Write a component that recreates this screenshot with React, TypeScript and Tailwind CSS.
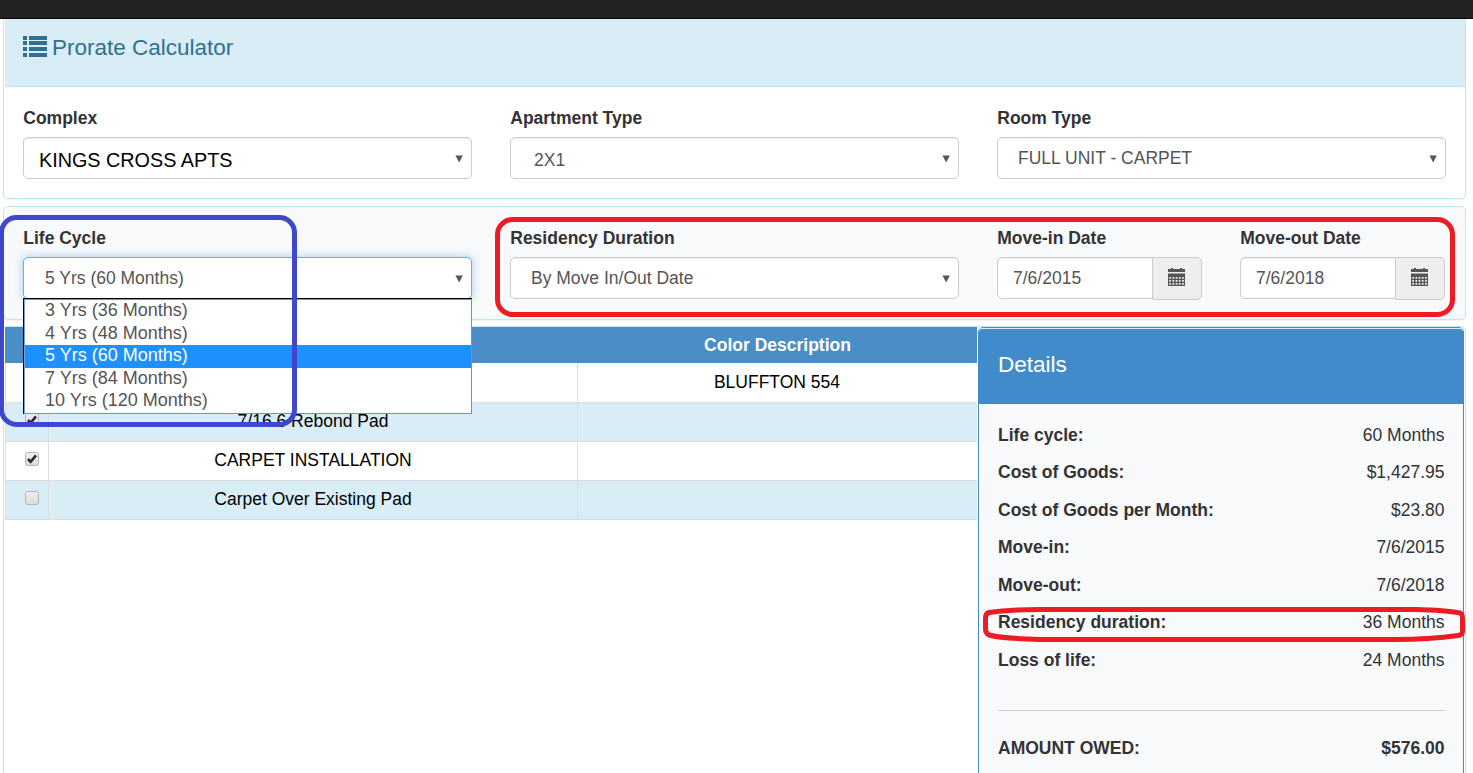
import React from "react";

const rows = [
  { checked: true, name: "CARPET", color: "BLUFFTON 554", height: "h-[40px]", bg: "bg-white" },
  { checked: true, name: "7/16 6 Rebond Pad", color: "", height: "h-[39px]", bg: "bg-[#d9edf7]" },
  { checked: true, name: "CARPET INSTALLATION", color: "", height: "h-[39px]", bg: "bg-white" },
  { checked: false, name: "Carpet Over Existing Pad", color: "", height: "h-[39px]", bg: "bg-[#d9edf7]" },
];

const details = [
  ["Life cycle:", "60 Months"],
  ["Cost of Goods:", "$1,427.95"],
  ["Cost of Goods per Month:", "$23.80"],
  ["Move-in:", "7/6/2015"],
  ["Move-out:", "7/6/2018"],
  ["Residency duration:", "36 Months"],
  ["Loss of life:", "24 Months"],
];

const options = ["3 Yrs (36 Months)", "4 Yrs (48 Months)", "5 Yrs (60 Months)", "7 Yrs (84 Months)", "10 Yrs (120 Months)"];

function ListIcon() {
  return (
    <svg width="24" height="21" viewBox="0 0 24 21" fill="#31708f" shapeRendering="crispEdges">
      {[0, 5, 11, 17].map((y) => (
        <g key={y}>
          <rect x="0" y={y} width="4" height="4" />
          <rect x="6" y={y} width="18" height="4" />
        </g>
      ))}
    </svg>
  );
}

function CalendarIcon() {
  return (
    <svg width="17" height="18" viewBox="0 0 17 18" fill="#555">
      <path d="M3 0h2v1h7V0h2v1h3v3H0V1h3z" />
      <path fillRule="evenodd" d="M0 5.500h17V18H0zM1.200 9v1.800h1.800V9zM4.400 9v1.800h1.800V9zM7.600 9v1.800h1.800V9zM10.800 9v1.800h1.800V9zM14 9v1.800h1.800V9zM1.200 12v1.800h1.800V12zM4.400 12v1.800h1.800V12zM7.600 12v1.800h1.800V12zM10.800 12v1.800h1.800V12zM14 12v1.800h1.800V12zM1.200 15v1.800h1.800V15zM4.400 15v1.800h1.800V15zM7.600 15v1.800h1.800V15zM10.800 15v1.800h1.800V15zM14 15v1.800h1.800V15z" />
    </svg>
  );
}

function Arrow() {
  return (
    <svg className="mt-[2px] mr-[8px] ml-auto" width="8" height="8" viewBox="0 0 8 8" fill="#555">
      <path d="M0.5 0.5h7.3L4.150 7.600z" />
    </svg>
  );
}

function Label({ children }: { children: React.ReactNode }) {
  return <div className="h-[25px] pl-[0.25px] text-[17.5px] leading-[25px] font-bold whitespace-nowrap text-[#333]">{children}</div>;
}

function Select({ children, className, border }: { children: React.ReactNode; className: string; border?: string }) {
  return (
    <div className={`mt-[6px] flex h-[42px] items-center rounded-[5px] border bg-white ${border ?? "border-[#ccc] shadow-[inset_0_1px_1px_rgba(0,0,0,0.075)]"}`}>
      <span className={`whitespace-nowrap ${className}`}>{children}</span>
      <Arrow />
    </div>
  );
}

function DateField({ label, value }: { label: string; value: string }) {
  return (
    <div className="w-[205px]">
      <Label>{label}</Label>
      <div className="mt-[6px] flex items-start">
        <div className="flex h-[42px] w-[156px] items-center rounded-l-[5px] border border-[#ccc] bg-white pl-[15px] text-[17.5px] text-[#555] shadow-[inset_0_1px_1px_rgba(0,0,0,0.075)]">
          {value}
        </div>
        <div className="-ml-px flex h-[43px] w-[50px] items-start justify-start rounded-r-[5px] border border-[#ccc] bg-[#eee] pt-[10px] pl-[15px]">
          <CalendarIcon />
        </div>
      </div>
    </div>
  );
}

function CheckBox({ checked }: { checked: boolean }) {
  return (
    <svg width="14" height="14" viewBox="0 0 14 14">
      <defs>
        <linearGradient id="boxFill" x1="0" y1="0" x2="0" y2="1">
          <stop offset="0" stopColor="#eee" />
          <stop offset="1" stopColor="#dcdcdc" />
        </linearGradient>
      </defs>
      <rect x="0.5" y="0.5" width="13" height="13" rx="2" fill="url(#boxFill)" stroke="#b4b4b4" />
      {checked && <path d="M3 7l2.600 2.800L11 3.300" fill="none" stroke="#2b2b2b" strokeWidth="2.600" />}
    </svg>
  );
}

export default function App() {
  return (
    <div className="relative h-[773px] w-[1473px] overflow-hidden bg-white font-['Liberation_Sans',Arial,sans-serif] text-[17.5px] text-[#333]">
      <div className="h-[19px] border-b border-[#080808] bg-[#222]" />

      <section className="ml-[3px] h-[180px] w-[1463px] rounded-b-[5px] border border-t-0 border-[#bce8f1] pl-px shadow-[0_1px_1px_rgba(0,0,0,0.05)]">
        <header className="flex h-[68px] items-start border-b border-[#bce8f1] bg-[#d9edf7] pt-[17px] pl-[18px]">
          <ListIcon />
          <h1 className="-mt-[1px] ml-[5px] text-[22.5px] leading-[25px] whitespace-nowrap text-[#31708f]">Prorate Calculator</h1>
        </header>
        <div className="grid grid-cols-[449px_449px_449px] gap-x-[38px] pt-[19px] pl-[18px]">
          <div>
            <Label>Complex</Label>
            <Select className="pt-[5px] pl-[15px] text-[19.8px] text-black">KINGS CROSS APTS</Select>
          </div>
          <div>
            <Label>Apartment Type</Label>
            <Select className="pt-[4px] pl-[23px] text-[17.5px] text-[#555]">2X1</Select>
          </div>
          <div>
            <Label>Room Type</Label>
            <Select className="pl-[20px] text-[17.5px] text-[#555]">FULL UNIT - CARPET</Select>
          </div>
        </div>
      </section>

      <section className="mt-[7px] ml-[3px] h-[114px] w-[1463px] rounded-[5px] border border-[#bce8f1] bg-[#f8f9fb] pt-[19px] pl-[19px] shadow-[0_1px_1px_rgba(0,0,0,0.05)]">
        <div className="grid grid-cols-[449px_449px_449px] gap-x-[38px]">
          <div>
            <Label>Life Cycle</Label>
            <Select className="pl-[21px] text-[17.5px] text-[#555]" border="border-[#66afe9] shadow-[0_0_8px_rgba(102,175,233,0.6)]">
              5 Yrs (60 Months)
            </Select>
          </div>
          <div>
            <Label>Residency Duration</Label>
            <Select className="pl-[20px] text-[17.5px] text-[#555]">By Move In/Out Date</Select>
          </div>
          <div className="flex gap-[38px]">
            <DateField label="Move-in Date" value="7/6/2015" />
            <DateField label="Move-out Date" value="7/6/2018" />
          </div>
        </div>
      </section>

      <section className="mt-[6px] ml-[3px] flex h-[460px] w-[1463px] rounded-t-[5px] border border-[#bce8f1] pl-px">
        <div className="w-[973px]">
          <div className="grid h-[36px] w-[972px] grid-cols-[44px_529px_399px] items-center bg-[#4b8dc6] text-center font-bold text-white">
            <span />
            <span>Description</span>
            <span>Color Description</span>
          </div>
          {rows.map((r) => (
            <div key={r.name} className={`grid w-[972px] grid-cols-[43px_529px_398px] border-b border-l border-[#ddd] text-center text-black ${r.height} ${r.bg}`}>
              <div className="flex items-start border-r border-[#ddd] pt-[10px] pl-[19px]">
                <CheckBox checked={r.checked} />
              </div>
              <div className="border-r border-[#ddd] pt-[6px] leading-[25px]">{r.name}</div>
              <div className="pt-[7px] leading-[25px]">{r.color}</div>
            </div>
          ))}
        </div>
        <aside className="h-[460px] w-[486px] rounded-t-[5px] border border-[#428bca] bg-[#f8f9fb]">
          <h2 className="h-[76px] rounded-t-[4px] border-t border-[#e4eef7] bg-[#428bca] pt-[23px] pl-[19px] text-[22.5px] leading-[25px] text-white">Details</h2>
          <div className="pt-[12px] pr-[18.5px] pl-[19px]">
            {details.map(([k, v]) => (
              <div key={k} className="flex h-[37.5px] items-center justify-between">
                <b>{k}</b>
                <span>{v}</span>
              </div>
            ))}
            <hr className="mt-[31px] border-t border-[#d2d2d2]" />
            <div className="mt-[24px] flex justify-between font-bold">
              <span>AMOUNT OWED:</span>
              <span>$576.00</span>
            </div>
          </div>
        </aside>
      </section>

      <div className="absolute top-[298px] left-[23px] h-[116px] w-[449px] border-t border-l border-black">
        <div className="h-full border border-[#6d93c8] border-l-[#7fa0cf] bg-white">
          {options.map((o, i) => (
            <div key={o} className={`h-[22.5px] pl-[20px] text-[18px] leading-[21px] ${i === 2 ? "bg-[#1e90ff] text-white" : "text-[#555]"}`}>
              {o}
            </div>
          ))}
        </div>
      </div>

      <svg className="pointer-events-none absolute top-0 left-0" width="1473" height="773" fill="none" strokeWidth="5">
        <rect x="1.5" y="217.5" width="293" height="207" rx="15" stroke="#3f48cc" />
        <rect x="497.5" y="219.5" width="955" height="95" rx="15" stroke="#ed1c24" />
        <path stroke="#ed1c24" strokeLinejoin="round" d="M989 612.5C1005 610 1025 609.5 1040 609.5H1415C1435 610 1450 611 1460 613Q1462.500 614 1462.500 618V631Q1462.500 635 1458 635.500C1440 638 1420 639.500 1395 639.500H1040C1020 639 1000 638 989 635Q985.500 633 985.500 629V618Q985.500 613.500 989 612.500Z" />
      </svg>
    </div>
  );
}
